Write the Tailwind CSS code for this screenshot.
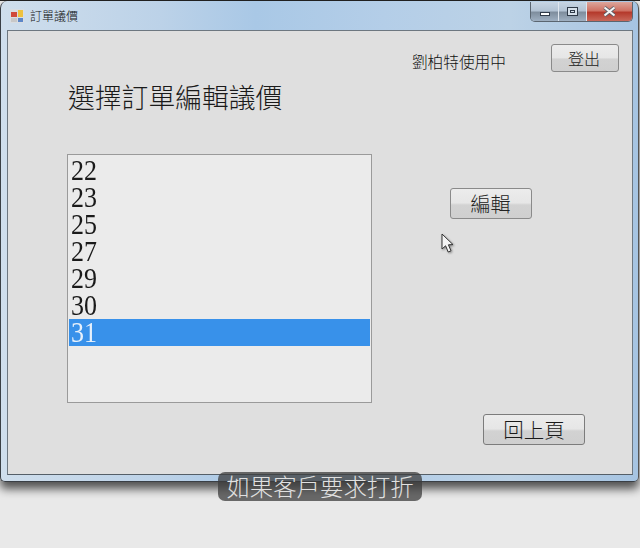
<!DOCTYPE html>
<html lang="zh-Hant">
<head>
<meta charset="utf-8">
<script src="https://cdn.jsdelivr.net/npm/@tailwindcss/browser@4"></script>
</head>
<body class="m-0">
<div class="relative w-[640px] h-[548px] overflow-hidden bg-[#e9e9e9] font-['Noto_Sans_CJK_TC',sans-serif] text-[#2a2a2a]">
  <!-- desktop strip above window -->
  <div class="h-px bg-[#222]"></div>
  <!-- window -->
  <div class="w-[639px] h-[481px] rounded-t-[7px] rounded-b-[5px] border border-[#3a3f45] border-t-0 border-r-[#555] bg-[linear-gradient(90deg,#cfdeec_0%,#bcd2e8_25%,#a9c8e6_40%,#b4cee8_60%,#bcd2e6_80%,#a6c4e2_100%)] shadow-[0_7px_10px_rgba(0,0,0,0.65)] flex flex-col">
    <!-- title bar -->
    <div class="h-[29px] flex items-start shrink-0">
      <div class="ml-[9px] mt-[8px] w-[14px] h-[14px] grid grid-cols-2 gap-px bg-[#d8dde2] p-px">
        <div class="bg-[#d04a3a] mt-[2px]"></div>
        <div class="bg-[#eec13e]"></div>
        <div class="bg-[#c8c8c8]"></div>
        <div class="bg-[#5c86c8]"></div>
      </div>
      <div class="ml-[6px] mt-[6px] text-[12px] leading-[18px] font-light text-[#111]">訂單議價</div>
      <div class="ml-auto mr-[5px] mt-px flex h-[20px] rounded-b-[5px] overflow-hidden border border-t-0 border-[#5a6570]">
        <div class="w-[28px] flex items-center justify-center border-r border-[#dfe6ee] bg-[linear-gradient(180deg,#c7d5e4_0%,#b3c3d4_45%,#7f8e9e_55%,#9fb0c2_100%)]">
          <div class="w-[10px] h-[4px] mt-[4px] border border-[#2f3a48] bg-white"></div>
        </div>
        <div class="w-[28px] flex items-center justify-center border-r border-[#dfe6ee] bg-[linear-gradient(180deg,#c7d5e4_0%,#b3c3d4_45%,#7f8e9e_55%,#9fb0c2_100%)]">
          <div class="w-[11px] h-[9px] border border-[#2f3a48] bg-[#d6e0ea] flex items-center justify-center"><div class="w-[5px] h-[3px] border border-[#2f3a48]"></div></div>
        </div>
        <div class="w-[45px] flex items-center justify-center bg-[linear-gradient(180deg,#dca69c_0%,#cf7264_45%,#b53a2c_55%,#c8685a_100%)]">
          <svg width="15" height="11" viewBox="0 0 15 11"><path d="M2.5 1.5 L12.5 9.5 M12.5 1.5 L2.5 9.5" stroke="#5a5f68" stroke-width="3.6"/><path d="M2.5 1.5 L12.5 9.5 M12.5 1.5 L2.5 9.5" stroke="#f4f4f4" stroke-width="2.2"/></svg>
        </div>
      </div>
    </div>
    <!-- client area -->
    <div class="ml-[6px] w-[626px] h-[445px] border border-[#6d7780] bg-[#dfdfdf] border-b-[#555f68] flex flex-col">
      <div class="mt-[13px] mr-[13px] flex justify-end items-center h-[28px]">
        <div class="text-[15.7px] leading-[20px] mt-[7px] font-light text-[#111]">劉柏特使用中</div>
        <button class="ml-[45px] w-[68px] h-[28px] pr-[2px] text-[16px] leading-none rounded-[3px] border border-[#8a8a8a] bg-[linear-gradient(180deg,#ececec_0%,#e6e6e6_48%,#d2d2d2_55%,#cfcfcf_100%)] font-light text-[#222]">登出</button>
      </div>
      <div class="mt-[7px] ml-[60px] text-[26.8px] leading-[36px] font-light text-[#1a1a1a]">選擇訂單編輯議價</div>
      <div class="mt-[39px] flex items-start">
        <div class="ml-[59px] w-[305px] h-[249px] border border-[#9a9a9a] bg-[#ebebeb] pt-[2px] pl-px pr-px font-['Liberation_Serif',serif] text-[26px] text-[#1a1a1a]">
          <div class="h-[27px] pl-[2px] pt-[2px]"><span class="block w-fit h-[23px] leading-[23px] scale-y-[1.14]">22</span></div>
          <div class="h-[27px] pl-[2px] pt-[2px]"><span class="block w-fit h-[23px] leading-[23px] scale-y-[1.14]">23</span></div>
          <div class="h-[27px] pl-[2px] pt-[2px]"><span class="block w-fit h-[23px] leading-[23px] scale-y-[1.14]">25</span></div>
          <div class="h-[27px] pl-[2px] pt-[2px]"><span class="block w-fit h-[23px] leading-[23px] scale-y-[1.14]">27</span></div>
          <div class="h-[27px] pl-[2px] pt-[2px]"><span class="block w-fit h-[23px] leading-[23px] scale-y-[1.14]">29</span></div>
          <div class="h-[27px] pl-[2px] pt-[2px]"><span class="block w-fit h-[23px] leading-[23px] scale-y-[1.14]">30</span></div>
          <div class="h-[27px] pl-[2px] pt-[2px] bg-[#3891ea] text-[#e6f0fb]"><span class="block w-fit h-[23px] leading-[23px] scale-y-[1.14]">31</span></div>
        </div>
        <button class="ml-[78px] mt-[34px] w-[82px] h-[31px] pr-px text-[20px] leading-none rounded-[3px] border border-[#8a8a8a] bg-[linear-gradient(180deg,#ececec_0%,#e6e6e6_48%,#d2d2d2_55%,#cfcfcf_100%)] font-light text-[#222]">編輯</button>
      </div>
      <div class="mt-[11px] mr-[47px] flex justify-end">
        <button class="w-[102px] h-[31px] text-[20.5px] leading-none rounded-[3px] border border-[#7c7c7c] bg-[linear-gradient(180deg,#ececec_0%,#e6e6e6_48%,#d2d2d2_55%,#cfcfcf_100%)] font-light text-[#1a1a1a]">回上頁</button>
      </div>
    </div>
  </div>
  <!-- mouse cursor overlay -->
  <svg class="absolute left-[440px] top-[233px]" width="17" height="22" viewBox="0 0 17 22">
    <path d="M2 1 L2 16 L5.6 12.8 L8.2 19 L11 17.8 L8.4 11.8 L13 11.6 Z" fill="#f4f4f4" stroke="#333" stroke-width="1" stroke-linejoin="round" style="filter:drop-shadow(1px 1px 1px rgba(0,0,0,.4))"/>
  </svg>
  <!-- subtitle overlay -->
  <div class="absolute left-[218px] top-[472px] w-[204px] h-[29px] rounded-[7px] bg-[#3c3c3c]/75 flex items-center justify-center text-[23.4px] leading-[29px] font-light text-[#e0e0e0]">如果客戶要求打折</div>
</div>
</body>
</html>
